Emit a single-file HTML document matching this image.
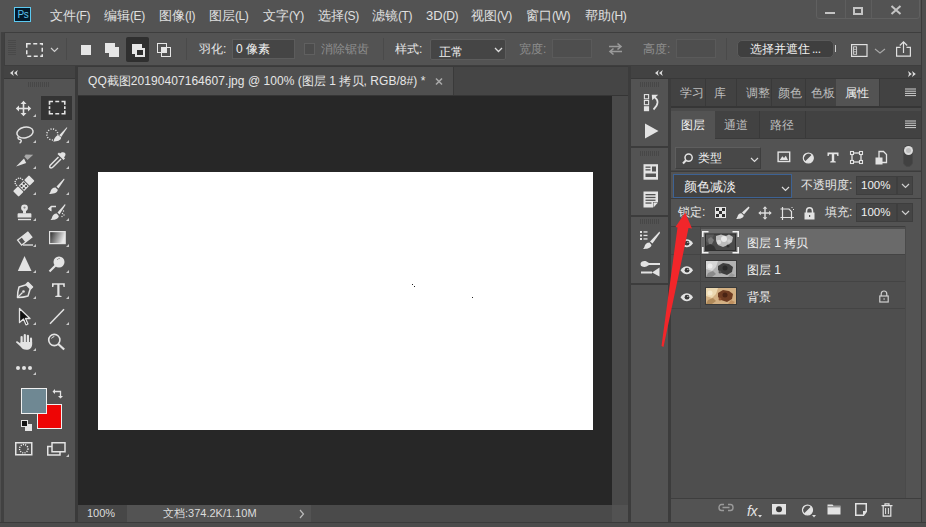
<!DOCTYPE html>
<html><head><meta charset="utf-8">
<style>
*{box-sizing:border-box;margin:0;padding:0}
html,body{width:926px;height:527px;overflow:hidden}
body{background:#474747;font-family:"Liberation Sans",sans-serif;color:#dcdcdc;position:relative}
.a{position:absolute}
.t{position:absolute;white-space:nowrap;line-height:1}
svg{position:absolute;overflow:visible}
</style></head><body>

<!-- menu bar -->
<div class="a" style="left:0;top:0;width:926px;height:32px;background:#535353"></div>
<!-- ps logo -->
<div class="a" style="left:14px;top:7px;width:16.5px;height:15px;background:#02192a;border:1.2px solid #5ccaf2"></div>
<div class="t" style="left:17.5px;top:10px;font-size:10px;color:#5ec4f0;letter-spacing:-0.3px">Ps</div>

<div id="menu" style="font-size:13px;color:#e0e0e0">
<div class="t" style="left:50px;top:9px">文件<span style="font-size:12px;letter-spacing:-0.4px">(F)</span></div>
<div class="t" style="left:104px;top:9px">编辑<span style="font-size:12px;letter-spacing:-0.4px">(E)</span></div>
<div class="t" style="left:159px;top:9px">图像<span style="font-size:12px;letter-spacing:-0.4px">(I)</span></div>
<div class="t" style="left:209px;top:9px">图层<span style="font-size:12px;letter-spacing:-0.4px">(L)</span></div>
<div class="t" style="left:263px;top:9px">文字<span style="font-size:12px;letter-spacing:-0.4px">(Y)</span></div>
<div class="t" style="left:318px;top:9px">选择<span style="font-size:12px;letter-spacing:-0.4px">(S)</span></div>
<div class="t" style="left:372px;top:9px">滤镜<span style="font-size:12px;letter-spacing:-0.4px">(T)</span></div>
<div class="t" style="left:426px;top:9px">3D<span style="font-size:12px;letter-spacing:-0.4px">(D)</span></div>
<div class="t" style="left:471px;top:9px">视图<span style="font-size:12px;letter-spacing:-0.4px">(V)</span></div>
<div class="t" style="left:526px;top:9px">窗口<span style="font-size:12px;letter-spacing:-0.4px">(W)</span></div>
<div class="t" style="left:585px;top:9px">帮助<span style="font-size:12px;letter-spacing:-0.4px">(H)</span></div>
</div>

<!-- window controls -->
<div class="a" style="left:816px;top:-2px;width:104px;height:21px;border:1px solid #606060;border-radius:0 0 3px 3px"></div>
<div class="a" style="left:845px;top:0;width:1px;height:18px;background:#5e5e5e"></div>
<div class="a" style="left:871px;top:0;width:1px;height:18px;background:#5e5e5e"></div>
<div class="a" style="left:825px;top:12px;width:10px;height:2px;background:#c4c4c4"></div>
<div class="a" style="left:853px;top:7px;width:10px;height:8px;border:2px solid #c4c4c4"></div>
<svg style="left:889px;top:5px" width="14" height="10"><path d="M2.5 1 L11.5 9 M11.5 1 L2.5 9" stroke="#c4c4c4" stroke-width="2"/></svg>

<!-- options bar -->
<div class="a" style="left:4px;top:32px;width:918px;height:34px;background:#535353;border:1px solid #3e3e3e"></div>
<div class="a" style="left:0;top:32px;width:1px;height:495px;background:#505050"></div>
<div class="a" style="left:1px;top:32px;width:3px;height:495px;background:#414141"></div>


<!-- options content -->
<div id="opts">
<svg style="left:8px;top:40px" width="9" height="20"><g stroke="#494949" stroke-width="1">
<path d="M0 0.5H8M0 2.5H8M0 4.5H8M0 6.5H8M0 8.5H8M0 10.5H8M0 12.5H8M0 14.5H8"/></g></svg>
<svg style="left:26px;top:43px" width="17" height="14"><rect x="0.75" y="0.75" width="15.5" height="12.5" fill="none" stroke="#e6e6e6" stroke-width="1.5" stroke-dasharray="4 2.5"/></svg>
<svg style="left:50px;top:47px" width="9" height="6"><path d="M1 1 L4.5 4.5 L8 1" fill="none" stroke="#cfcfcf" stroke-width="1.2"/></svg>
<div class="a" style="left:66px;top:38px;width:1px;height:22px;background:#4a4a4a"></div>
<div class="a" style="left:81px;top:45px;width:10px;height:10px;background:#e6e6e6"></div>
<div class="a" style="left:105px;top:43px;width:10px;height:10px;background:#e6e6e6"></div>
<div class="a" style="left:109px;top:47px;width:10px;height:10px;background:#e6e6e6"></div>
<div class="a" style="left:126px;top:37px;width:23px;height:25px;background:#2f2f2f;border-radius:2px"></div>
<div class="a" style="left:132px;top:44px;width:10px;height:10px;background:#e6e6e6"></div>
<div class="a" style="left:135px;top:48px;width:10px;height:9px;background:#2f2f2f;border:2px solid #e6e6e6"></div>
<div class="a" style="left:157px;top:43px;width:10px;height:10px;border:1.5px solid #e6e6e6"></div>
<div class="a" style="left:161px;top:47px;width:10px;height:10px;border:1.5px solid #e6e6e6"></div>
<div class="a" style="left:161px;top:47px;width:6px;height:6px;background:#e6e6e6"></div>
<div class="a" style="left:186px;top:38px;width:1px;height:22px;background:#4a4a4a"></div>
<div class="t" style="left:199px;top:43px;font-size:12px;color:#e6e6e6">羽化:</div>
<div class="a" style="left:232px;top:39px;width:63px;height:20px;background:#454545;border:1px solid #5c5c5c"></div>
<div class="t" style="left:236px;top:43px;font-size:12px;color:#f0f0f0">0 像素</div>
<div class="a" style="left:304px;top:43px;width:11px;height:12px;border:1px solid #606060;background:#4c4c4c"></div>
<div class="t" style="left:321px;top:43px;font-size:12px;color:#8e8e8e">消除锯齿</div>
<div class="a" style="left:383px;top:38px;width:1px;height:22px;background:#4a4a4a"></div>
<div class="t" style="left:395px;top:43px;font-size:12px;color:#e6e6e6">样式:</div>
<div class="a" style="left:430px;top:39px;width:76px;height:21px;background:#454545;border:1px solid #5c5c5c;border-radius:2px"></div>
<div class="t" style="left:439px;top:45.5px;font-size:12px;color:#f0f0f0">正常</div>
<svg style="left:494px;top:47px" width="9" height="6"><path d="M1 1 L4.5 4.5 L8 1" fill="none" stroke="#dcdcdc" stroke-width="1.3"/></svg>
<div class="t" style="left:519px;top:43px;font-size:12px;color:#8e8e8e">宽度:</div>
<div class="a" style="left:552px;top:39px;width:40px;height:19px;background:#4e4e4e;border:1px solid #5a5a5a"></div>
<svg style="left:607px;top:42px" width="17" height="14"><g fill="none" stroke="#9a9a9a" stroke-width="1.6"><path d="M2 4.5H14M10.5 1.5L14 4.5 10.5 7.5M15 9.5H3M6.5 6.5L3 9.5 6.5 12.5"/></g></svg>
<div class="t" style="left:643px;top:43px;font-size:12px;color:#8e8e8e">高度:</div>
<div class="a" style="left:676px;top:39px;width:40px;height:19px;background:#4e4e4e;border:1px solid #5a5a5a"></div>
<div class="a" style="left:726px;top:38px;width:1px;height:22px;background:#4a4a4a"></div>
<div class="a" style="left:737px;top:40px;width:97px;height:18px;background:#3f3f3f;border-radius:5px;border:1px solid #5a5a5a"></div>
<div class="t" style="left:750px;top:43px;font-size:12px;color:#f0f0f0">选择并遮住<span style="margin-left:2px;letter-spacing:-0.5px">...</span></div>
<div class="a" style="left:835px;top:45px;width:1px;height:7px;background:#cfcfcf"></div>
<svg style="left:851px;top:44px" width="17" height="13"><rect x="0.6" y="0.6" width="15.4" height="11.8" fill="none" stroke="#e0e0e0" stroke-width="1.2"/><rect x="2.6" y="2.8" width="3" height="7.5" fill="none" stroke="#d8d8d8" stroke-width="0.9"/><path d="M2.6 5.3H5.6M2.6 7.8H5.6" stroke="#d8d8d8" stroke-width="0.8"/></svg>
<svg style="left:874px;top:48px" width="12" height="6"><path d="M1 1 L6 5 L11 1" fill="none" stroke="#a8a8a8" stroke-width="1.1"/></svg>
<svg style="left:896px;top:41px" width="16" height="17"><g fill="none" stroke="#e0e0e0" stroke-width="1.2"><path d="M4.5 6.3H0.6V15.2H14.4V6.3H10.5"/><path d="M7.5 12V0.8M3.8 4.5L7.5 0.8 11.2 4.5"/></g></svg>
</div>

<!-- panels: toolbar -->
<div class="a" style="left:4px;top:66px;width:72px;height:13px;background:#434343;border-bottom:1px solid #383838"></div>
<div class="a" style="left:75px;top:66px;width:3px;height:456px;background:#3a3a3a"></div>
<div class="a" style="left:4px;top:79px;width:71px;height:443px;background:#535353"></div>


<!-- toolbar content -->
<div id="tools">
<svg style="left:10px;top:70px" width="8" height="6"><path d="M3.8 0L0 3L3.8 6L2.8 3ZM7.8 0L4 3L7.8 6L6.8 3Z" fill="#dcdcdc"/></svg>
<svg style="left:28px;top:82px" width="22" height="5"><path d="M0.5 0V5M2.5 0V5M4.5 0V5M6.5 0V5M8.5 0V5M10.5 0V5M12.5 0V5M14.5 0V5M16.5 0V5M18.5 0V5M20.5 0V5" stroke="#474747" stroke-width="1"/></svg>
<!-- tri marks -->
<svg style="left:0;top:0" width="80" height="470"><g fill="#c8c8c8">
<path d="M36 114 V117 H33Z"/><path d="M69 114V117H66Z"/>
<path d="M36 140V143H33Z"/><path d="M69 140V143H66Z"/>
<path d="M36 166V169H33Z"/><path d="M69 166V169H66Z"/>
<path d="M36 192V195H33Z"/><path d="M69 192V195H66Z"/>
<path d="M36 218V221H33Z"/><path d="M69 218V221H66Z"/>
<path d="M36 244V247H33Z"/><path d="M69 244V247H66Z"/>
<path d="M36 270V273H33Z"/><path d="M69 270V273H66Z"/>
<path d="M36 296V299H33Z"/><path d="M69 296V299H66Z"/>
<path d="M36 322V325H33Z"/><path d="M69 322V325H66Z"/>
<path d="M36 348V351H33Z"/>
<path d="M36 372V375H33Z"/>
<path d="M69 454V457H66Z"/>
</g></svg>
<!-- move -->
<svg style="left:15px;top:100px" width="17" height="17"><g fill="#e3e3e3"><path d="M7.7 2.5H9.3V14.5H7.7Z"/><path d="M2.5 7.7H14.5V9.3H2.5Z"/>
<path d="M8.5 0.8L11.5 4H5.5Z"/><path d="M8.5 16.2L11.5 13H5.5Z"/><path d="M0.8 8.5L4 5.5V11.5Z"/><path d="M16.2 8.5L13 5.5V11.5Z"/></g></svg>
<!-- marquee selected -->
<div class="a" style="left:41px;top:96px;width:31px;height:24px;background:#343434"></div>
<svg style="left:48px;top:100px" width="18" height="15"><g fill="none" stroke="#e3e3e3" stroke-width="1.6"><path d="M1.5 4.8V1.5H5M7.3 1.5H11.2M13.5 1.5H16.8V4.8M16.8 6.2V9M16.8 10.4V13.8H13.5M11.2 13.8H7.3M5 13.8H1.5V10.4M1.5 9V6.2"/></g></svg>
<!-- lasso -->
<svg style="left:15px;top:126px" width="20" height="18"><g fill="none" stroke="#e3e3e3" stroke-width="1.5"><ellipse cx="10" cy="6.5" rx="8.2" ry="5.3" transform="rotate(-12 10 6.5)"/><path d="M3.5 10.5C2 12.5 4 13.5 5.5 13.5C7 14.5 6 16.5 4.5 17"/></g></svg>
<!-- quick select -->
<svg style="left:46px;top:126px" width="22" height="17"><circle cx="6.3" cy="8.5" r="5.5" fill="none" stroke="#e3e3e3" stroke-width="1.5" stroke-dasharray="1.1 1.5"/>
<path d="M20.8 1.2L13.2 9.2L15.2 11L21.3 1.8Z" fill="#e3e3e3"/><path d="M12.5 9.5C10 9.5 9 11.5 8.5 13C8.2 14 7.8 14.8 7.2 15.5C11 15.5 15 14.5 15.2 11.5Z" fill="#e3e3e3"/></svg>
<!-- slice -->
<svg style="left:15px;top:152px" width="20" height="17"><path d="M9.3 4.4L10.7 2.6L18.2 2.8L12.5 8Z" fill="#a8a8a8"/><path d="M1.1 14.4L9 6.5L11.2 11Z" fill="#e3e3e3"/></svg>
<!-- eyedropper -->
<svg style="left:48px;top:151px" width="19" height="18"><g fill="#e3e3e3"><path d="M12 2.5C13.5 0.8 16 0.8 17 2C18 3.2 17.5 5 16 6.2L17 7.5L15.5 9L9.5 3L11 1.5Z"/></g><path d="M10.5 6L2.5 14C1.5 15 1.5 16.5 2.5 16.8C3.5 17.2 4.5 16.5 5.5 15.5L13 8" fill="none" stroke="#e3e3e3" stroke-width="1.5"/></svg>
<!-- healing -->
<svg style="left:13px;top:176px" width="22" height="20"><g transform="rotate(-45 10.8 10)"><rect x="-0.5" y="6" width="7" height="8" rx="1" fill="#e3e3e3"/><rect x="15.1" y="6" width="7" height="8" rx="1" fill="#e3e3e3"/><rect x="7.5" y="6.2" width="6.6" height="7.6" fill="#e3e3e3"/></g>
<g fill="#3a3a3a"><circle cx="10.8" cy="7.7" r="1.1"/><circle cx="13.1" cy="10" r="1.1"/><circle cx="10.8" cy="12.3" r="1.1"/><circle cx="8.5" cy="10" r="1.1"/></g>
<g fill="#e3e3e3"><circle cx="3.4" cy="3.5" r="0.8"/><circle cx="5.4" cy="2.3" r="0.8"/><circle cx="7.5" cy="2.3" r="0.8"/><circle cx="9.4" cy="3.5" r="0.8"/><circle cx="2.2" cy="5.5" r="0.8"/><circle cx="2.3" cy="7.5" r="0.8"/><circle cx="3.5" cy="9.3" r="0.8"/></g></svg>
<!-- brush -->
<svg style="left:48px;top:177px" width="17" height="18"><path d="M16 1.5L8.5 9.5L10.5 11.5L16.5 2.5Z" fill="#e3e3e3"/><path d="M7.5 10.5C4.5 10.5 3 12.5 2.5 14.5C2 16 1.5 16.5 1 17C4.5 17 9.5 16.5 9.8 12.8Z" fill="#e3e3e3"/></svg>
<!-- stamp -->
<svg style="left:17px;top:203px" width="15" height="18"><g fill="#e3e3e3"><circle cx="7.5" cy="4.8" r="3.4"/><rect x="6" y="6.5" width="3" height="4"/><path d="M1.5 10.2H13.5C14 10.2 14.4 10.6 14.4 11.1V14.5H0.6V11.1C0.6 10.6 1 10.2 1.5 10.2Z"/><rect x="1" y="15.8" width="13" height="1.4"/></g><circle cx="7.5" cy="4.6" r="1.1" fill="#8a8a8a"/></svg>
<!-- history brush -->
<svg style="left:47px;top:203px" width="19" height="18"><path d="M18 1L10.5 9.5L12.5 11.5L18.5 2Z" fill="#e3e3e3"/><path d="M9.8 10.5C7 10.5 5.5 12.5 5 14.5C4.5 16 4 16.5 3.5 17C7 17 11.5 16.5 11.8 13Z" fill="#e3e3e3"/><path d="M9 3.5H4.5L2 5.8L4 7.5" fill="none" stroke="#e3e3e3" stroke-width="1.5"/><path d="M1.2 5.8L4.5 3V8.5Z" fill="#e3e3e3"/>
<g fill="#e3e3e3"><circle cx="16.5" cy="8" r="0.7"/><circle cx="15.5" cy="10.5" r="0.7"/><circle cx="17" cy="12" r="0.7"/><circle cx="15" cy="13.5" r="0.7"/></g></svg>
<!-- eraser -->
<svg style="left:16px;top:231px" width="18" height="16"><g transform="rotate(-38 9 7.5)"><rect x="2.2" y="4.2" width="13" height="6.5" fill="none" stroke="#e3e3e3" stroke-width="1.3"/><rect x="7" y="4.2" width="8.2" height="6.5" fill="#e3e3e3"/></g><path d="M7 14H17" stroke="#e3e3e3" stroke-width="1.3"/></svg>
<!-- gradient -->
<svg style="left:48px;top:230px" width="19" height="15"><defs><linearGradient id="gr" x1="0" x2="1" y1="0" y2="0.3"><stop offset="0" stop-color="#262626"/><stop offset="1" stop-color="#e8e8e8"/></linearGradient></defs><rect x="1.6" y="1.6" width="15.6" height="12" fill="url(#gr)" stroke="#e3e3e3" stroke-width="1.2"/></svg>
<!-- blur triangle -->
<svg style="left:17px;top:255px" width="16" height="17"><path d="M7.5 1L14.5 16H0.8Z" fill="#e3e3e3"/></svg>
<!-- dodge -->
<svg style="left:48px;top:256px" width="18" height="17"><circle cx="11" cy="6" r="5.5" fill="#e3e3e3"/><path d="M7.5 9.5L1.5 15.5" stroke="#e3e3e3" stroke-width="2.2"/><path d="M9 4A3 3 0 0 1 12 2.5" stroke="#9a9a9a" stroke-width="1" fill="none"/></svg>
<!-- pen -->
<svg style="left:16px;top:281px" width="18" height="18"><path d="M12 1.5L16.5 6L14 8.5L12 15C9 16 4 16.5 1.5 16.5C1.5 14 2 9 3 6L9.5 4Z" fill="none" stroke="#e3e3e3" stroke-width="1.5" stroke-linejoin="round"/><path d="M12 1.5L16.5 6L14 8.5L9.5 4Z" fill="#e3e3e3"/><path d="M1.5 16.5L6.5 11.5" stroke="#e3e3e3" stroke-width="1.2"/><circle cx="7.5" cy="10.5" r="1.3" fill="#e3e3e3"/></svg>
<!-- type -->
<svg style="left:51px;top:282px" width="15" height="16"><path d="M1 1.2H13.8V5H12.5L12 2.8H8.5V13.5L10.5 14V15H4.3V14L6.3 13.5V2.8H2.8L2.3 5H1Z" fill="#e3e3e3"/></svg>
<!-- path select -->
<svg style="left:18px;top:307px" width="14" height="19"><path d="M1.5 1.5L12 11.5H7.5L10 17L8 17.8L5.5 12L1.5 15.5Z" fill="#111" stroke="#e3e3e3" stroke-width="1.3" stroke-linejoin="round"/></svg>
<!-- line -->
<svg style="left:49px;top:308px" width="16" height="17"><path d="M1 15.8L15 1.2" stroke="#e3e3e3" stroke-width="1.5"/></svg>
<!-- hand -->
<svg style="left:15px;top:332px" width="19" height="19"><g fill="#e3e3e3"><rect x="5.5" y="4" width="2.2" height="9" rx="1.1"/><rect x="8.7" y="1.9" width="2.2" height="10" rx="1.1"/><rect x="11.8" y="2.7" width="2.2" height="10" rx="1.1"/><rect x="14.9" y="5.6" width="2.2" height="8" rx="1.1"/>
<path d="M5.5 10H17.1V12.5C17.1 15.5 15 17.8 11.5 17.8C8.5 17.8 6.8 16.5 5.5 14.5L1.2 10.5C0.6 9.8 1.5 8.8 2.3 9.3L5.5 11.5Z"/></g></svg>
<!-- zoom -->
<svg style="left:47px;top:333px" width="19" height="18"><circle cx="7.3" cy="7" r="5.6" fill="none" stroke="#e3e3e3" stroke-width="1.6"/><path d="M11.2 11L17.2 16.5" stroke="#e3e3e3" stroke-width="2.2"/><path d="M4.6 5.5A3 3 0 0 1 7.3 3.6" stroke="#e3e3e3" stroke-width="1" fill="none"/></svg>
<!-- dots -->
<svg style="left:15px;top:365px" width="18" height="6"><g fill="#e3e3e3"><circle cx="3" cy="3" r="2"/><circle cx="9" cy="3" r="2"/><circle cx="15" cy="3" r="2"/></g></svg>
<!-- colors -->
<div class="a" style="left:37px;top:404px;width:25px;height:25px;background:#ee0505;border:1.5px solid #f0f0f0"></div>
<div class="a" style="left:21px;top:388px;width:26px;height:26px;background:#6f8893;border:1.5px solid #f0f0f0"></div>
<svg style="left:52px;top:387px" width="12" height="12"><path d="M2.5 4.5H8.5V9.5" fill="none" stroke="#e3e3e3" stroke-width="1.3"/><path d="M0.5 4.5L3 2V7Z M8.5 11.5L6 9H11Z" fill="#e3e3e3"/></svg>
<div class="a" style="left:25px;top:424px;width:7px;height:7px;background:#e3e3e3"></div>
<div class="a" style="left:21px;top:420px;width:7px;height:7px;background:#111;border:1px solid #e3e3e3"></div>
<!-- quick mask -->
<svg style="left:15px;top:442px" width="18" height="14"><rect x="0.75" y="0.75" width="16" height="12" fill="none" stroke="#e3e3e3" stroke-width="1.5"/><circle cx="8.75" cy="6.75" r="4.2" fill="none" stroke="#f0f0f0" stroke-width="1.4" stroke-dasharray="1.1 1.2"/></svg>
<!-- screen mode -->
<svg style="left:47px;top:442px" width="19" height="14"><rect x="5" y="0.75" width="13" height="9" fill="#535353" stroke="#e3e3e3" stroke-width="1.5"/><path d="M5 4.5H0.75V13H13V9.75" fill="none" stroke="#e3e3e3" stroke-width="1.5"/></svg>
</div>

<!-- document area -->
<div class="a" style="left:78px;top:66px;width:550px;height:29px;background:#454545;border-top:1px solid #3a3a3a"></div>
<div class="a" style="left:78px;top:67px;width:375px;height:28px;background:#4f4f4f"></div>
<div class="a" style="left:453px;top:67px;width:1px;height:28px;background:#3a3a3a"></div>
<div class="t" style="left:88px;top:75px;font-size:12px;letter-spacing:0.05px;color:#e6e6e6">QQ截图20190407164607.jpg @ 100% (图层 1 拷贝, RGB/8#) *</div>
<svg style="left:435px;top:78px" width="8" height="7"><path d="M1 0.5 L7 6.5 M7 0.5 L1 6.5" stroke="#a8a8a8" stroke-width="1.6"/></svg>
<div class="a" style="left:78px;top:95px;width:550px;height:1px;background:#353535"></div>
<div class="a" style="left:78px;top:96px;width:534px;height:409px;background:#272727"></div>
<div class="a" style="left:612px;top:96px;width:16px;height:409px;background:#4a4a4a"></div>
<div class="a" style="left:612px;top:505px;width:16px;height:17px;background:#525252"></div>
<div class="a" style="left:98px;top:172px;width:495px;height:258px;background:#ffffff"></div>
<div class="a" style="left:412px;top:284px;width:1px;height:1px;background:#222"></div><div class="a" style="left:414px;top:286px;width:1px;height:1px;background:#222"></div><div class="a" style="left:472px;top:297px;width:1px;height:1px;background:#222"></div>
<!-- status bar -->
<div class="a" style="left:78px;top:505px;width:534px;height:17px;background:#535353"></div>
<div class="a" style="left:78px;top:505px;width:49px;height:17px;background:#474747"></div>
<div class="a" style="left:311px;top:505px;width:301px;height:17px;background:#4a4a4a"></div>
<div class="t" style="left:87px;top:508px;font-size:11px;color:#dcdcdc">100%</div>
<div class="t" style="left:163px;top:508px;font-size:11px;color:#dcdcdc">文档:374.2K/1.10M</div>
<svg style="left:299px;top:509px" width="6" height="10"><path d="M1 1 L4.5 5 L1 9" stroke="#bbb" stroke-width="1.2" fill="none"/></svg>

<!-- middle panel -->
<div class="a" style="left:630px;top:66px;width:292px;height:13px;background:#424242;border-bottom:1px solid #383838"></div>
<div class="a" style="left:631px;top:79px;width:37px;height:443px;background:#535353"></div>


<!-- middle panel content -->
<div id="mid">
<div class="a" style="left:668px;top:79px;width:3px;height:443px;background:#3c3c3c"></div>
<div class="a" style="left:628px;top:66px;width:3px;height:456px;background:#3c3c3c"></div>
<svg style="left:655px;top:70px" width="8" height="6"><path d="M3.8 0L0 3L3.8 6L2.8 3ZM7.8 0L4 3L7.8 6L6.8 3Z" fill="#dcdcdc"/></svg>
<svg style="left:908px;top:71px" width="8" height="6"><path d="M0 0L3.8 3L0 6L1 3ZM4 0L7.8 3L4 6L5 3Z" fill="#dcdcdc"/></svg>
<svg style="left:640px;top:82px" width="19" height="5"><path d="M0.5 0V5M2.5 0V5M4.5 0V5M6.5 0V5M8.5 0V5M10.5 0V5M12.5 0V5M14.5 0V5M16.5 0V5M18.5 0V5" stroke="#474747" stroke-width="1"/></svg>
<svg style="left:643px;top:94px" width="17" height="18"><g fill="none" stroke="#e3e3e3" stroke-width="1.1"><rect x="1.4" y="0.6" width="4.2" height="4.2"/><rect x="1.4" y="6.5" width="4.2" height="4.2"/></g><rect x="0.9" y="12.2" width="5.2" height="5" fill="#e3e3e3"/><path d="M8.8 0.8L15.2 0.8L9.2 6.2Z" fill="#e3e3e3"/><path d="M11.5 3.2C15.5 5.5 16 10.5 10.5 15.5" fill="none" stroke="#e3e3e3" stroke-width="1.7"/></svg>
<svg style="left:644px;top:123px" width="15" height="16"><path d="M1 0.5L14.5 8L1 15.5Z" fill="#e3e3e3"/></svg>
<div class="a" style="left:631px;top:146px;width:37px;height:2px;background:#3c3c3c"></div>
<svg style="left:640px;top:151px" width="19" height="5"><path d="M0.5 0V5M2.5 0V5M4.5 0V5M6.5 0V5M8.5 0V5M10.5 0V5M12.5 0V5M14.5 0V5M16.5 0V5M18.5 0V5" stroke="#474747" stroke-width="1"/></svg>
<svg style="left:643px;top:164px" width="16" height="16"><rect x="0.5" y="0.2" width="14.5" height="15.5" fill="#e3e3e3"/><g fill="#535353"><rect x="2.5" y="2.5" width="5" height="1.3"/><rect x="2.5" y="5.2" width="5" height="1.3"/><rect x="9" y="2.5" width="4" height="5"/><rect x="2.5" y="9.5" width="10.5" height="3.5"/></g></svg>
<svg style="left:643px;top:191px" width="16" height="18"><path d="M0.5 0.5H15V11L11 16.5H0.5Z" fill="#e3e3e3"/><g fill="#535353"><rect x="2.5" y="3" width="10" height="1.3"/><rect x="2.5" y="5.8" width="10" height="1.3"/><rect x="2.5" y="8.6" width="10" height="1.3"/><rect x="2.5" y="11.4" width="6" height="1.3"/><path d="M10 11H15.5V17H10Z"/></g><path d="M10.5 11.5H15L10.5 16.5Z" fill="#e3e3e3"/></svg>
<div class="a" style="left:631px;top:215px;width:37px;height:2px;background:#3c3c3c"></div>
<svg style="left:640px;top:219px" width="19" height="5"><path d="M0.5 0V5M2.5 0V5M4.5 0V5M6.5 0V5M8.5 0V5M10.5 0V5M12.5 0V5M14.5 0V5M16.5 0V5M18.5 0V5" stroke="#474747" stroke-width="1"/></svg>
<svg style="left:639px;top:230px" width="22" height="20"><g fill="#e3e3e3"><rect x="1" y="1" width="2" height="2"/><rect x="1" y="4.5" width="2" height="2"/><rect x="1" y="8" width="2" height="2"/><rect x="4.5" y="1.3" width="4" height="1.3"/><rect x="4.5" y="4.8" width="4" height="1.3"/><rect x="4.5" y="8.3" width="4" height="1.3"/>
<path d="M20.5 1.5L11 11.5L13.5 13.5L21 3Z"/><path d="M10.5 12.5C7.5 12.5 6 14.5 5.5 16.5C5 18 4.5 18.5 4 19C7.5 19 12 18.5 12.5 15Z"/></g></svg>
<svg style="left:639px;top:259px" width="22" height="18"><g fill="#e3e3e3"><path d="M1.5 5C1.5 2.5 5 1.5 7.5 2.5L10 4V6L7.5 7.5C5 8.5 1.5 7.5 1.5 5Z"/><rect x="10" y="4" width="11" height="2"/><rect x="2" y="12.5" width="11" height="2"/><path d="M13 13.5L20.5 8.5V17.5Z"/></g></svg>
<div class="a" style="left:631px;top:283px;width:37px;height:2px;background:#3c3c3c"></div>
</div>

<!-- right panel -->
<div class="a" style="left:671px;top:79px;width:250px;height:443px;background:#535353"></div>


<div id="right">
<!-- tab row 1 -->
<div class="a" style="left:671px;top:79px;width:250px;height:27px;background:#424242"></div>
<div class="a" style="left:836px;top:79px;width:43px;height:28px;background:#535353"></div>
<div class="a" style="left:705px;top:79px;width:1px;height:27px;background:#393939"></div>
<div class="a" style="left:736px;top:79px;width:1px;height:27px;background:#393939"></div>
<div class="a" style="left:771px;top:79px;width:1px;height:27px;background:#393939"></div>
<div class="a" style="left:805px;top:79px;width:1px;height:27px;background:#393939"></div>
<div class="a" style="left:879px;top:79px;width:1px;height:27px;background:#393939"></div>
<div style="font-size:12px;color:#bdbdbd">
<div class="t" style="left:680px;top:87px">学习</div>
<div class="t" style="left:714px;top:87px">库</div>
<div class="t" style="left:746px;top:87px">调整</div>
<div class="t" style="left:778px;top:87px">颜色</div>
<div class="t" style="left:811px;top:87px">色板</div>
<div class="t" style="left:845px;top:87px;color:#f2f2f2">属性</div>
</div>
<svg style="left:905px;top:88px" width="11" height="9"><path d="M0 1H11M0 3.2H11M0 5.4H11M0 7.6H11" stroke="#cfcfcf" stroke-width="1"/></svg>
<div class="a" style="left:671px;top:106px;width:250px;height:2px;background:#363636"></div>
<div class="a" style="left:671px;top:108px;width:250px;height:3px;background:#4a4a4a"></div>
<!-- tab row 2 -->
<div class="a" style="left:671px;top:111px;width:250px;height:27px;background:#424242"></div>
<div class="a" style="left:671px;top:111px;width:44px;height:28px;background:#535353"></div>
<div class="a" style="left:759px;top:111px;width:1px;height:27px;background:#393939"></div>
<div class="a" style="left:805px;top:111px;width:1px;height:27px;background:#393939"></div>
<div style="font-size:12px;color:#bdbdbd">
<div class="t" style="left:681px;top:119px;color:#f2f2f2">图层</div>
<div class="t" style="left:724px;top:119px">通道</div>
<div class="t" style="left:770px;top:119px">路径</div>
</div>
<svg style="left:905px;top:120px" width="11" height="9"><path d="M0 1H11M0 3.2H11M0 5.4H11M0 7.6H11" stroke="#cfcfcf" stroke-width="1"/></svg>
<div class="a" style="left:715px;top:138px;width:206px;height:1px;background:#3a3a3a"></div>

<!-- filter row -->
<div class="a" style="left:675px;top:147px;width:86px;height:22px;background:#484848;border:1px solid #5e5e5e;border-right-color:#3e3e3e;border-bottom-color:#3e3e3e"></div>
<svg style="left:682px;top:153px" width="11" height="12"><circle cx="6.6" cy="4.6" r="3.6" fill="none" stroke="#e3e3e3" stroke-width="1.5"/><path d="M4 7.3L1 10.5" stroke="#e3e3e3" stroke-width="2"/></svg>
<div class="t" style="left:698px;top:152px;font-size:12px;color:#f0f0f0">类型</div>
<svg style="left:750px;top:157px" width="9" height="6"><path d="M1 1 L4.5 4.5 L8 1" fill="none" stroke="#dcdcdc" stroke-width="1.2"/></svg>
<svg style="left:777px;top:151px" width="14" height="12"><rect x="1.1" y="1.1" width="11.6" height="9.4" fill="none" stroke="#e3e3e3" stroke-width="1.4"/><path d="M2.8 9L5.3 5.2L7 7L8.8 4.8L11 9Z" fill="#e3e3e3"/></svg>
<svg style="left:802px;top:152px" width="13" height="12"><circle cx="6.3" cy="6" r="5" fill="#e3e3e3"/><path d="M3 9.5L10 2.5A5 5 0 0 0 3 9.5Z" fill="#535353"/><circle cx="6.3" cy="6" r="5" fill="none" stroke="#e3e3e3" stroke-width="1.2"/></svg>
<svg style="left:827px;top:152px" width="12" height="11"><path d="M0.5 0.5H11.5V4H10.3L9.8 2.3H7.2V9L8.8 9.5V10.5H3.2V9.5L4.8 9V2.3H2.2L1.7 4H0.5Z" fill="#e3e3e3"/></svg>
<svg style="left:850px;top:151px" width="13" height="13"><rect x="2" y="2" width="9" height="9" fill="none" stroke="#e3e3e3" stroke-width="1.3"/><g fill="#535353" stroke="#e3e3e3" stroke-width="1.1"><rect x="0.5" y="0.5" width="3" height="3"/><rect x="9.5" y="0.5" width="3" height="3"/><rect x="0.5" y="9.5" width="3" height="3"/><rect x="9.5" y="9.5" width="3" height="3"/></g></svg>
<svg style="left:875px;top:151px" width="12" height="14"><path d="M4 0.5H8.5L11.5 3.5V11.5H4Z" fill="none" stroke="#e3e3e3" stroke-width="1.3"/><rect x="0.5" y="6.5" width="7" height="7" fill="#e3e3e3"/></svg>
<div class="a" style="left:903px;top:145px;width:10px;height:22px;background:#414141;border:1px solid #484848;border-radius:5px"></div>
<div class="a" style="left:903.5px;top:146px;width:9px;height:9px;background:#dcdcdc;border-radius:50%"></div><div class="a" style="left:905.5px;top:148px;width:5px;height:5px;background:#bdbdbd;border-radius:50%"></div>
<div class="a" style="left:671px;top:170px;width:250px;height:2px;background:#474747"></div>
<div class="a" style="left:671px;top:171px;width:250px;height:1px;background:#3c3c3c"></div>

<!-- blend row -->
<div class="a" style="left:673px;top:174px;width:119px;height:24px;background:#424242;border:1.5px solid #3d6294"></div>
<div class="t" style="left:684px;top:181px;font-size:12.5px;color:#f0f0f0">颜色减淡</div>
<svg style="left:781px;top:186px" width="9" height="6"><path d="M1 1 L4.5 4.5 L8 1" fill="none" stroke="#dcdcdc" stroke-width="1.2"/></svg>
<div class="t" style="left:801px;top:179px;font-size:12px;color:#e6e6e6">不透明度:</div>
<div class="a" style="left:856px;top:176px;width:41px;height:19px;background:#454545;border:1px solid #3e3e3e"></div>
<div class="t" style="left:861px;top:180px;font-size:11.5px;color:#f0f0f0">100%</div>
<div class="a" style="left:897px;top:176px;width:16px;height:19px;background:#454545;border:1px solid #3e3e3e"></div>
<svg style="left:901px;top:183px" width="9" height="6"><path d="M1 1 L4.5 4.5 L8 1" fill="none" stroke="#cfcfcf" stroke-width="1.2"/></svg>
<div class="a" style="left:671px;top:198px;width:250px;height:1px;background:#3c3c3c"></div>

<!-- lock row -->
<div class="t" style="left:678px;top:206px;font-size:12px;color:#e6e6e6">锁定:</div>
<svg style="left:715px;top:207px" width="11" height="11"><rect x="0" y="0" width="11" height="11" fill="#e3e3e3"/><g fill="#2e2e2e"><rect x="1" y="1" width="3" height="3"/><rect x="7" y="1" width="3" height="3"/><rect x="4" y="4" width="3" height="3"/><rect x="1" y="7" width="3" height="3"/><rect x="7" y="7" width="3" height="3"/></g></svg>
<svg style="left:735px;top:206px" width="15" height="14"><path d="M13.6 0.6L7 6.6L9 8.6L14.6 1.8Z" fill="#e3e3e3"/><path d="M6.3 7.3C4 7.3 3 9 2.5 10.5C2.2 11.5 1.8 12.3 1.2 13C4.8 13 8.6 12.3 8.7 9.5Z" fill="#e3e3e3"/></svg>
<svg style="left:758px;top:206px" width="14" height="14"><g fill="#e3e3e3"><path d="M6.3 2.5H7.7V11.5H6.3Z"/><path d="M2.5 6.3H11.5V7.7H2.5Z"/><path d="M7 0.3L9.3 2.8H4.7Z"/><path d="M7 13.7L9.3 11.2H4.7Z"/><path d="M0.3 7L2.8 4.7V9.3Z"/><path d="M13.7 7L11.2 4.7V9.3Z"/></g></svg>
<svg style="left:780px;top:206px" width="15" height="15"><g fill="none" stroke="#e3e3e3" stroke-width="1.2"><path d="M2.5 1V14M0.5 11.5H14M0.5 3H9L11.5 5.5V13.5"/></g><g fill="#e3e3e3"><rect x="11.5" y="1" width="1" height="1"/><rect x="13" y="3" width="1" height="1"/></g></svg>
<svg style="left:804px;top:207px" width="11" height="13"><path d="M2.5 6V4C2.5 1.8 3.8 0.8 5.5 0.8C7.2 0.8 8.5 1.8 8.5 4V6" fill="none" stroke="#e3e3e3" stroke-width="1.5"/><rect x="0.5" y="5.5" width="10" height="7" fill="#e3e3e3"/><rect x="5" y="8" width="1.2" height="2" fill="#535353"/></svg>
<div class="t" style="left:825px;top:206px;font-size:12px;color:#e6e6e6">填充:</div>
<div class="a" style="left:856px;top:203px;width:41px;height:19px;background:#454545;border:1px solid #3e3e3e"></div>
<div class="t" style="left:861px;top:207px;font-size:11.5px;color:#f0f0f0">100%</div>
<div class="a" style="left:897px;top:203px;width:16px;height:19px;background:#454545;border:1px solid #3e3e3e"></div>
<svg style="left:901px;top:210px" width="9" height="6"><path d="M1 1 L4.5 4.5 L8 1" fill="none" stroke="#cfcfcf" stroke-width="1.2"/></svg>

<!-- layers list -->
<div class="a" style="left:671px;top:226px;width:234px;height:1px;background:#3e3e3e"></div>
<div class="a" style="left:671px;top:227px;width:234px;height:271px;background:#4e4e4e"></div>
<div class="a" style="left:905px;top:226px;width:1px;height:272px;background:#4a4a4a"></div>
<div class="a" style="left:700px;top:229px;width:205px;height:25px;background:#6a6a6a"></div>
<div class="a" style="left:671px;top:254px;width:234px;height:1px;background:#444"></div>
<div class="a" style="left:671px;top:281px;width:234px;height:1px;background:#444"></div>
<div class="a" style="left:671px;top:308px;width:234px;height:1px;background:#444"></div>
<div class="a" style="left:700px;top:227px;width:1px;height:81px;background:#454545"></div>
<svg style="left:680px;top:238px" width="15" height="70"><g fill="#e3e3e3"><path d="M0.5 5.2C2.8 2.0 5 1.2000000000000002 6.8 1.2000000000000002C8.6 1.2000000000000002 10.8 2.0 13.1 5.2C10.8 8.4 8.6 9.2 6.8 9.2C5 9.2 2.8 8.4 0.5 5.2Z"/><path d="M0.5 32.2C2.8 29.000000000000004 5 28.200000000000003 6.8 28.200000000000003C8.6 28.200000000000003 10.8 29.000000000000004 13.1 32.2C10.8 35.400000000000006 8.6 36.2 6.8 36.2C5 36.2 2.8 35.400000000000006 0.5 32.2Z"/><path d="M0.5 59.2C2.8 56.0 5 55.2 6.8 55.2C8.6 55.2 10.8 56.0 13.1 59.2C10.8 62.400000000000006 8.6 63.2 6.8 63.2C5 63.2 2.8 62.400000000000006 0.5 59.2Z"/></g><g fill="#3a3a3a"><circle cx="7" cy="5.2" r="2.4"/><circle cx="7" cy="32.2" r="2.4"/><circle cx="7" cy="59.2" r="2.4"/></g><g fill="#bbb"><circle cx="7.8" cy="4.4" r="0.7"/><circle cx="7.8" cy="31.4" r="0.7"/><circle cx="7.8" cy="58.4" r="0.7"/></g></svg>
<!-- thumbnails -->
<svg style="left:702px;top:231px" width="37" height="23"><g fill="none" stroke="#f2f2f2" stroke-width="1.6"><path d="M0.8 6V0.8H6.5M30.5 0.8H36.2V6M0.8 16V21.7H6.5M30.5 21.7H36.2V16"/></g>
<rect x="3" y="2.5" width="31" height="17.5" fill="#2e2e2e"/><rect x="4" y="3.5" width="29" height="15.5" fill="#4a4a4a"/>
<path d="M4 3.5H12L10 9L6 12L4 10Z" fill="#5a5a5a"/><path d="M6 8L9 6L12 9L10 13L7 14Z" fill="#7a7a7a"/>
<path d="M14 5L19 3.5L24 5L27 3.5L31 6L30 11L26 14L21 16L16 14L14 10Z" fill="#bdbdbd"/>
<circle cx="22" cy="8" r="3" fill="#e8e8e8"/><circle cx="17" cy="11" r="2.2" fill="#dcdcdc"/><circle cx="27" cy="10" r="1.8" fill="#d0d0d0"/>
<path d="M4 15L8 13L12 15L14 19H4Z" fill="#333"/><circle cx="26" cy="15" r="1.5" fill="#2e2e2e"/></svg>
<svg style="left:705px;top:260px" width="32" height="18"><rect x="0" y="0" width="32" height="18" fill="#3a3a3a"/><rect x="1" y="1" width="30" height="16" fill="#b2b2b2"/>
<path d="M1 1H13L11 7L7 11L1 9Z" fill="#d6d6d6"/><circle cx="5" cy="6" r="2.5" fill="#ececec"/><path d="M3 13L8 11L11 14L7 17H1Z" fill="#8a8a8a"/>
<path d="M13 6L18 3L24 4L28 7L27 12L22 15L16 13L13 10Z" fill="#3e3e3e"/><circle cx="20" cy="8" r="2.5" fill="#2a2a2a"/><circle cx="15" cy="12" r="1.5" fill="#555"/><path d="M26 13L30 15L28 17H23Z" fill="#999"/></svg>
<svg style="left:705px;top:287px" width="32" height="18"><rect x="0" y="0" width="32" height="18" fill="#3a3a3a"/><rect x="1" y="1" width="30" height="16" fill="#d3b083"/>
<path d="M1 1H13L11 7L7 11L1 9Z" fill="#ecd8b0"/><circle cx="5" cy="6" r="2.5" fill="#f6e9cc"/><path d="M3 13L8 11L11 14L7 17H1Z" fill="#b08a5a"/>
<path d="M13 6L18 3L24 4L28 7L27 12L22 15L16 13L13 10Z" fill="#6e3c22"/><circle cx="20" cy="8" r="2.5" fill="#4a2414"/><circle cx="15" cy="12" r="1.5" fill="#8a5030"/><path d="M26 13L30 15L28 17H23Z" fill="#c09060"/></svg>
<div style="font-size:12px;color:#f0f0f0">
<div class="t" style="left:747px;top:237px">图层 1 拷贝</div>
<div class="t" style="left:747px;top:264px">图层 1</div>
<div class="t" style="left:747px;top:291px">背景</div>
</div>
<svg style="left:879px;top:290px" width="10" height="13"><path d="M2.2 6V4C2.2 2 3.4 1 5 1C6.6 1 7.8 2 7.8 4V6" fill="none" stroke="#d0d0d0" stroke-width="1.2"/><rect x="0.8" y="6" width="8.4" height="6" fill="none" stroke="#d0d0d0" stroke-width="1.2"/><rect x="4.5" y="8.3" width="1.2" height="1.4" fill="#d0d0d0"/></svg>

<!-- bottom bar -->
<div class="a" style="left:671px;top:498px;width:250px;height:1px;background:#3e3e3e"></div>
<div class="a" style="left:671px;top:499px;width:250px;height:23px;background:#535353"></div>
<svg style="left:718px;top:503px" width="16" height="10"><g fill="none" stroke="#9a9a9a" stroke-width="1.4"><path d="M6 1.5H3.5C2 1.5 1 3 1 4.5C1 6 2 7.5 3.5 7.5H6M10 1.5H12.5C14 1.5 15 3 15 4.5C15 6 14 7.5 12.5 7.5H10M4.5 4.5H11.5"/></g></svg>
<div class="t" style="left:747px;top:504px;font-size:14px;font-style:italic;letter-spacing:-0.5px;color:#e3e3e3">fx</div>
<svg style="left:758px;top:515px" width="4" height="3"><path d="M0 0H4L2 2.5Z" fill="#dcdcdc"/></svg>
<svg style="left:772px;top:504px" width="14" height="11"><rect x="0" y="0" width="14" height="10.5" fill="#e3e3e3"/><circle cx="7" cy="5.2" r="3" fill="#3a3a3a"/></svg>
<svg style="left:801px;top:504px" width="13" height="13"><circle cx="6.5" cy="6" r="5" fill="#e3e3e3"/><path d="M3 9.5L10 2.5A5 5 0 0 0 3 9.5Z" fill="#535353"/><circle cx="6.5" cy="6" r="5" fill="none" stroke="#e3e3e3" stroke-width="1.2"/></svg>
<svg style="left:812px;top:515px" width="4" height="3"><path d="M0 0H4L2 2.5Z" fill="#dcdcdc"/></svg>
<svg style="left:827px;top:503px" width="14" height="12"><path d="M0.5 1.5H5.5L6.5 2.8H13.5V11.5H0.5Z" fill="#e3e3e3"/><path d="M0.5 3.8H13.5" stroke="#535353" stroke-width="0.8"/></svg>
<svg style="left:855px;top:503px" width="12" height="13"><path d="M0.75 0.75H11.25V8.5L8.5 12.25H0.75Z" fill="none" stroke="#e3e3e3" stroke-width="1.5"/><path d="M8 8H11.5L8 12Z" fill="#e3e3e3"/></svg>
<svg style="left:881px;top:503px" width="12" height="14"><g fill="none" stroke="#e3e3e3" stroke-width="1.2"><path d="M0.5 2.6H11.5M4 2.6V0.8H8V2.6M2.2 3V13.2H9.8V3"/><path d="M4.6 5V11M7.4 5V11" stroke-width="1"/></g></svg>
</div>


<div class="a" style="left:921px;top:0;width:1px;height:527px;background:#3a3a3a"></div>
<div class="a" style="left:922px;top:0;width:4px;height:527px;background:#4e4e4e"></div>
<div class="a" style="left:0;top:522px;width:926px;height:1px;background:#3a3a3a"></div>
<div class="a" style="left:0;top:523px;width:926px;height:4px;background:#4b4b4b"></div>
<!-- red arrow -->
<svg style="left:0;top:0" width="926" height="527"><path d="M685.2 212.5L692 228.5L688.5 228L663.5 347L661.5 346L677.5 227.5L675.5 227Z" fill="#f2262a"/></svg>

</body></html>
